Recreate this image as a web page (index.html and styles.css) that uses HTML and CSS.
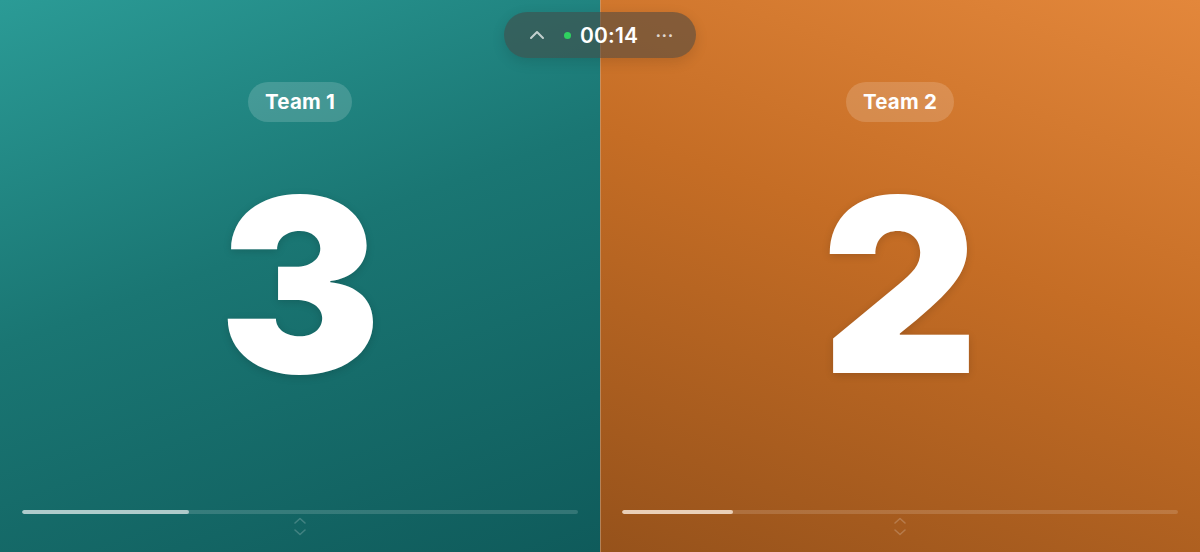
FILE: index.html
```
<!DOCTYPE html>
<html>
<head>
<meta charset="utf-8">
<link rel="stylesheet" href="styles.css">
</head>
<body>
<div class="board">
  <section class="panel panel-left">
    <div class="label">Team 1</div>
    <div class="score">3</div>
    <div class="bottom">
      <div class="track"><div class="fill" style="width:30%"></div></div>
      <svg class="chev" width="14" height="20" viewBox="0 0 14 20"><path d="M2 6 L7 1.5 L12 6 M2 13 L7 17.5 L12 13" fill="none" stroke="currentColor" stroke-width="1.6" stroke-linecap="round" stroke-linejoin="round"/></svg>
    </div>
  </section>
  <section class="panel panel-right">
    <div class="label">Team 2</div>
    <div class="score">2</div>
    <div class="bottom">
      <div class="track"><div class="fill" style="width:20%"></div></div>
      <svg class="chev" width="14" height="20" viewBox="0 0 14 20"><path d="M2 6 L7 1.5 L12 6 M2 13 L7 17.5 L12 13" fill="none" stroke="currentColor" stroke-width="1.6" stroke-linecap="round" stroke-linejoin="round"/></svg>
    </div>
  </section>
  <div class="timer">
    <svg class="up" width="16" height="10" viewBox="0 0 16 10"><path d="M2 8 L8 2 L14 8" fill="none" stroke="currentColor" stroke-width="2" stroke-linecap="round" stroke-linejoin="round"/></svg>
    <span class="dot"></span>
    <span class="time">00:14</span>
    <span class="more">···</span>
  </div>
</div>
</body>
</html>
```
FILE: styles.css
```
* { box-sizing: border-box; }
html, body { margin: 0; padding: 0; }
body {
  width: 1200px;
  height: 552px;
  overflow: hidden;
  font-family: Inter, "Noto Sans", sans-serif;
}
.board {
  position: relative;
  display: flex;
  width: 1200px;
  height: 552px;
}
.panel {
  flex: 0 0 600px;
  height: 552px;
  display: flex;
  flex-direction: column;
  align-items: center;
  padding-top: 82px;
}
.panel-left {
  background: linear-gradient(160deg, #2b9b96 0%, #1a7673 45%, #0f5b5b 100%);
}
.panel-right {
  background: linear-gradient(200deg, #e3873b 0%, #c56d25 45%, #96521b 100%);
  box-shadow: inset 1px 0 0 rgba(200, 170, 140, 0.55);
}
.label {
  height: 40px;
  padding: 0 17px;
  border-radius: 20px;
  background: rgba(255, 255, 255, 0.16);
  color: #fff;
  font-size: 20.5px;
  font-weight: 700;
  line-height: 40px;
  letter-spacing: 0.2px;
}
.score {
  margin-top: 43px;
  height: 240px;
  color: #fff;
  font-size: 243px;
  font-weight: 900;
  line-height: 240px;
  text-shadow: 0 2px 8px rgba(0, 0, 0, 0.15);
}
.bottom {
  margin-top: auto;
  margin-bottom: 15px;
  width: 556px;
  display: flex;
  flex-direction: column;
  align-items: center;
}
.track {
  width: 100%;
  height: 4px;
  border-radius: 2px;
  background: rgba(255, 255, 255, 0.15);
  overflow: hidden;
}
.fill {
  height: 100%;
  border-radius: 2px;
  background: rgba(255, 255, 255, 0.6);
}
.panel-right .fill { background: rgba(255, 240, 225, 0.75); }
.chev {
  margin-top: 3px;
  color: rgba(255, 255, 255, 0.2);
}
.timer {
  position: absolute;
  left: 504px;
  top: 12px;
  width: 192px;
  height: 46px;
  border-radius: 23px;
  background: rgba(70, 70, 66, 0.55);
  box-shadow: 0 4px 14px rgba(0, 0, 0, 0.12);
  display: flex;
  align-items: center;
  padding-left: 25px;
  color: #fff;
}
.up { color: rgba(255, 255, 255, 0.7); }
.dot {
  width: 7px;
  height: 7px;
  border-radius: 50%;
  background: #2fd160;
  margin-left: 19px;
}
.time {
  margin-left: 9px;
  font-size: 21px;
  font-weight: 600;
  letter-spacing: 0.2px;
}
.more {
  margin-left: 17px;
  font-size: 21px;
  color: rgba(255, 255, 255, 0.75);
}
```
